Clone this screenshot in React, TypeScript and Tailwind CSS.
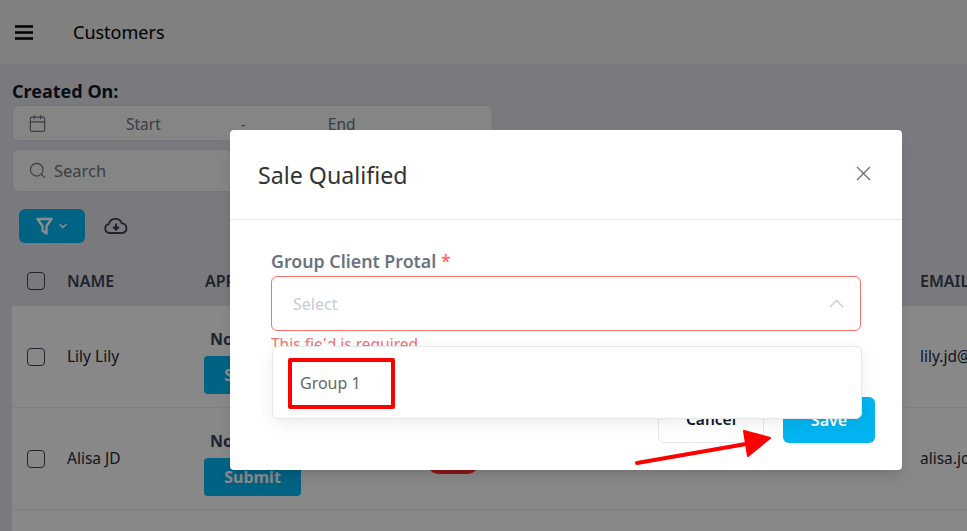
import { Calendar, ChevronDown, Search } from "lucide-react";

const rows = [
  { name: "Lily Lily", email: "lily.jd@gmail.com" },
  { name: "Alisa JD", email: "alisa.jd@gmail.com" },
];

const Row = ({ name, email }: { name: string; email: string }) => (
  <div className="flex h-[102px] w-[960px] items-center border-b border-[#e5e7eb] bg-[#f8f8f8] first-of-type:rounded-t-[6px]">
    <span className="ml-[15px] h-[18px] w-[18px] shrink-0 rounded-[4px] border border-[#374151]" />
    <span className="ml-[22px] w-[137px] shrink-0 text-[15.5px] text-[#1f2937]">{name}</span>
    <div className="mt-[8px] flex w-[224px] shrink-0 flex-col items-start gap-[5px]">
      <span className="ml-[6px] text-[16px] font-bold text-[#374151]">Not Submitted</span>
      <span className="flex h-[38px] w-[97px] items-center justify-center rounded-[4px] bg-[#00b4f0] font-bold text-white">
        Submit
      </span>
    </div>
    <span className="h-[30px] w-[50px] shrink-0 rounded-[10px] bg-[#ff2a2a]" />
    <span className="ml-[442px] shrink-0 text-[15.5px] whitespace-nowrap text-[#1f2937]">{email}</span>
  </div>
);

export default function App() {
  return (
    <div className="relative h-[531px] w-[967px] overflow-hidden bg-[#dedee5] font-['Noto_Sans',sans-serif]">
      <header className="flex h-16 items-center bg-[#e9e9e9] pl-[15px]">
        <svg width="18" height="15" viewBox="0 0 18 15" className="text-black">
          <path d="M0 1.5h18M0 7.5h18M0 13.5h18" stroke="currentColor" strokeWidth="2.6" />
        </svg>
        <span className="ml-[40px] text-[18px] text-black">Customers</span>
      </header>

      <main className="overflow-hidden pt-[15px] pl-3">
        <p className="text-[18px] leading-[24px] font-bold text-[#111827]">Created On:</p>
        <div className="mt-[2px] flex h-9 w-[481px] items-center rounded-[6px] border border-[#d1d5db] bg-[#f2f2f2] pl-[15px] text-[15.5px] text-[#6b7280]">
          <Calendar size={19} strokeWidth={1.5} />
          <span className="mt-[3px] ml-[79px]">Start</span>
          <span className="mt-[3px] ml-[80px]">-</span>
          <span className="mt-[3px] ml-[82px]">End</span>
        </div>
        <div className="mt-2 flex h-[43px] w-[481px] items-center rounded-[6px] border border-[#d1d5db] bg-[#f2f2f2] pl-[15px] text-[#6b7280]">
          <Search size={19} strokeWidth={1.5} />
          <span className="mt-[2px] ml-[7px] text-[16.5px]">Search</span>
        </div>
        <div className="mt-[17px] ml-[7px] flex items-center">
          <span className="flex h-[34px] w-[66px] items-center justify-center gap-[4px] rounded-[6px] bg-[#00b4f0] text-white">
            <svg width="17" height="19" viewBox="0 0 17 19" fill="none" stroke="currentColor" strokeWidth="2.4" strokeLinejoin="round">
              <path d="M1.5 2h14l-5 7v7.5l-4-3V9z" />
            </svg>
            <ChevronDown size={12} strokeWidth={3} />
          </span>
          <svg width="24" height="16" viewBox="0 0 24 16" fill="none" className="ml-[19px] text-[#374151]">
            <path
              d="M6 15H5.5a4.5 4.5 0 0 1-.7-8.9 6.8 6.8 0 0 1 13-.8 4.9 4.9 0 0 1 .7 9.7z"
              stroke="currentColor"
              strokeWidth="1.8"
              strokeLinejoin="round"
            />
            <path d="M12 5.5v5M9.2 8.8 12 11.6l2.8-2.8" stroke="currentColor" strokeWidth="2" />
          </svg>
        </div>

        <div className="mt-[17px] mb-[4px] flex h-[42px] w-[960px] items-center text-[16px] font-semibold text-[#374151]">
          <span className="ml-[15px] h-[18px] w-[18px] shrink-0 rounded-[4px] border border-[#374151]" />
          <span className="ml-[22px] w-[138px] shrink-0">NAME</span>
          <span className="w-[715px] shrink-0">APPROVAL</span>
          <span className="shrink-0">EMAIL</span>
        </div>
        {rows.map((row) => (
          <Row key={row.name} {...row} />
        ))}
        <div className="h-[102px] w-[960px] bg-[#f8f8f8]" />
      </main>

      <div className="absolute inset-0 bg-black/45" />

      <div className="absolute top-[130px] left-[230px] h-[340px] w-[672px] rounded-[4px] bg-white shadow-lg">
        <div className="flex h-[90px] items-center justify-between border-b border-[#e5e7eb] pr-[31px] pl-[28px]">
          <h2 className="mt-[2px] text-[23.2px] text-[#333333]">Sale Qualified</h2>
          <svg width="15" height="15" viewBox="0 0 15 15" className="-mt-[2px] text-[#6b7280]">
            <path d="M1 1l13 13M14 1 1 14" stroke="currentColor" strokeWidth="1.4" />
          </svg>
        </div>
        <div className="relative px-[41px] pt-[29px]">
          <p className="text-[17.8px] leading-6 font-semibold text-[#6b7280]">
            Group Client Protal <span className="text-[#f87171]">*</span>
          </p>
          <div className="mt-[3px] flex h-[55px] items-center justify-between rounded-[6px] border border-[#f87171] pr-[16px] pl-[21px] text-[#c9cbd2]">
            <span className="text-[16px]">Select</span>
            <svg width="15" height="9" viewBox="0 0 15 9" fill="none" stroke="currentColor" strokeWidth="1.3">
              <path d="M1 8l6.5-6.5L14 8" />
            </svg>
          </div>
          <p className="mt-[2px] text-[15.5px] leading-[22px] text-[#f87171]">This field is required</p>
        </div>
        <div className="absolute top-[267px] right-[27px] flex gap-[19px]">
          <span className="flex h-[46px] w-[106px] items-center justify-center rounded-[6px] border border-[#e5e7eb] text-[15.5px] font-semibold text-[#111827]">
            Cancel
          </span>
          <span className="flex h-[46px] w-[92px] items-center justify-center rounded-[6px] bg-[#00b4f0] font-semibold text-white">
            Save
          </span>
        </div>
      </div>

      <div className="absolute top-[346px] left-[272px] flex h-[73px] w-[590px] items-center rounded-[6px] border border-[#e5e7eb] bg-white pl-[27px] text-[16px] text-[#666666] shadow-[0_4px_16px_rgba(0,0,0,0.08)]">
        <span className="absolute -top-[5px] left-[48px] h-[9px] w-[9px] rotate-45 bg-white" />
        Group 1
      </div>

      <div className="absolute top-[358px] left-[288px] h-[51px] w-[107px] rounded-[2px] border-4 border-[#ff0000]" />

      <svg className="absolute top-[425px] left-[630px]" width="150" height="45" viewBox="0 0 150 45">
        <path d="M7 38 L116 19" stroke="#ff0000" strokeWidth="4" strokeLinecap="round" />
        <path d="M114 6 L140 13 L118 31 Z" fill="#ff0000" stroke="#ff0000" strokeWidth="2" strokeLinejoin="round" />
      </svg>
    </div>
  );
}
